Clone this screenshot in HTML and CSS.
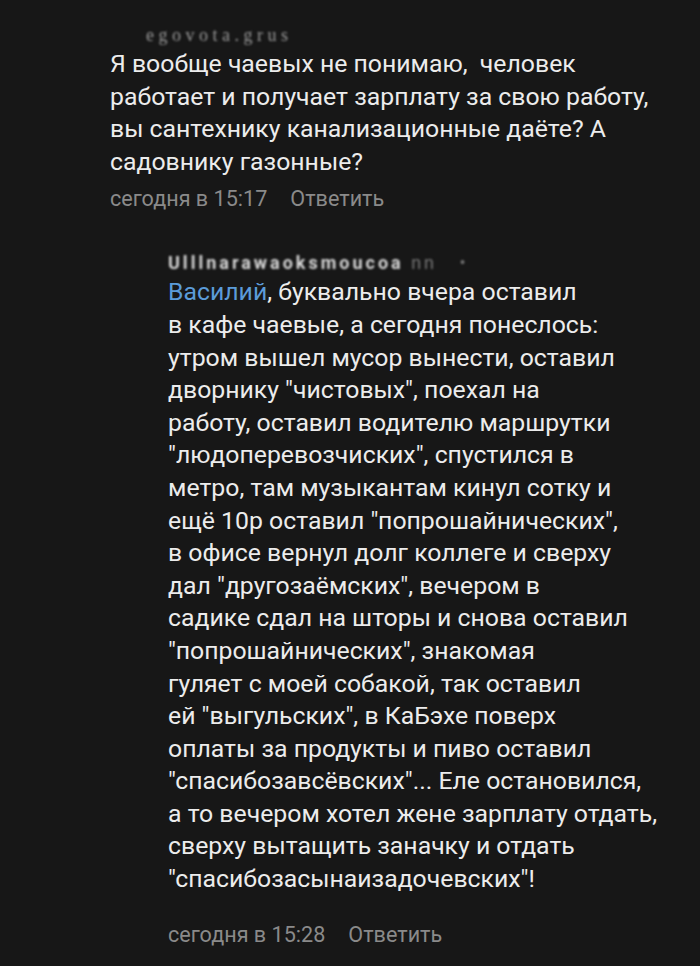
FILE: index.html
```html
<!DOCTYPE html>
<html lang="ru">
<head>
<meta charset="utf-8">
<link rel="stylesheet" href="styles.css">
</head>
<body>
<div class="page">
  <div class="comment first">
    <div class="author"><span class="blur light">egovota.grus</span></div>
    <div class="text">Я вообще чаевых не понимаю,&nbsp; человек<br>работает и получает зарплату за свою работу,<br>вы сантехнику канализационные даёте? А<br>садовнику газонные?</div>
    <div class="meta"><span>сегодня в 15:17</span><span class="reply">Ответить</span></div>
  </div>
  <div class="comment second">
    <div class="author"><span class="blur bold">Ulllnarawaoksmoucoa</span><span class="blur dim">&nbsp;nn&nbsp;&nbsp; •</span></div>
    <div class="text"><span class="mention">Василий</span>, буквально вчера оставил<br>в кафе чаевые, а сегодня понеслось:<br>утром вышел мусор вынести, оставил<br>дворнику "чистовых", поехал на<br>работу, оставил водителю маршрутки<br>"людоперевозчиских", спустился в<br>метро, там музыкантам кинул сотку и<br>ещё 10р оставил "попрошайнических",<br>в офисе вернул долг коллеге и сверху<br>дал "другозаёмских", вечером в<br>садике сдал на шторы и снова оставил<br>"попрошайнических", знакомая<br>гуляет с моей собакой, так оставил<br>ей "выгульских", в КаБэхе поверх<br>оплаты за продукты и пиво оставил<br>"спасибозавсёвских"... Еле остановился,<br>а то вечером хотел жене зарплату отдать,<br>сверху вытащить заначку и отдать<br>"спасибозасынаизадочевских"!</div>
    <div class="meta last"><span>сегодня в 15:28</span><span class="reply">Ответить</span></div>
  </div>
</div>
</body>
</html>
```
FILE: styles.css
```css
html, body {
  margin: 0;
  padding: 0;
  background: #171717;
}
body {
  font-family: Roboto, "Noto Sans", sans-serif;
  color: #ececec;
  width: 700px;
  height: 966px;
  overflow: hidden;
}
.page {
  padding-top: 22px;
}
.comment.first {
  padding-left: 110px;
}
.comment.second {
  padding-left: 168px;
  margin-top: 37px;
}
.author {
  height: 26px;
  font-size: 18px;
  line-height: 26px;
  color: #cfcfcf;
}
.first .author {
  padding-left: 36px;
}
.blur {
  filter: blur(1.1px);
  letter-spacing: 3px;
}
.light {
  color: #9a9a9a;
  font-family: "Liberation Serif", serif;
  letter-spacing: 4.5px;
}
.bold {
  font-weight: 700;
  color: #d8d8d8;
}
.dim {
  color: #777;
}
.text {
  font-size: 24.8px;
  line-height: 32.6px;
}
.mention {
  color: #5b9bd9;
}
.meta {
  display: flex;
  gap: 23px;
  font-size: 21.6px;
  line-height: 28px;
  color: #8a8a8a;
  margin-top: 7px;
}
.meta.last {
  margin-top: 25px;
}
```
